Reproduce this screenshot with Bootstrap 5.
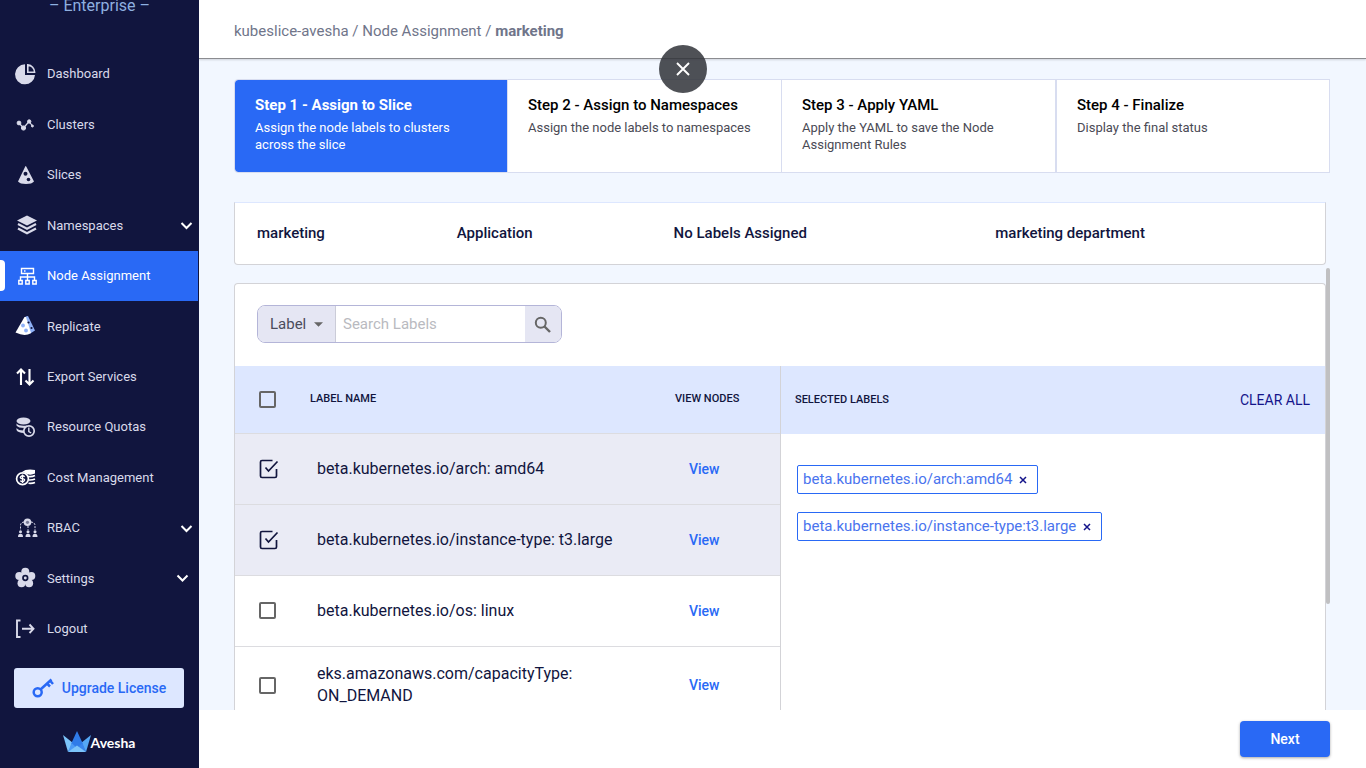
<!DOCTYPE html>
<html lang="en">
<head>
<meta charset="utf-8">
<meta name="viewport" content="width=device-width, initial-scale=1">
<title>Node Assignment - marketing</title>
<link href="https://cdn.jsdelivr.net/npm/bootstrap@5.3.0/dist/css/bootstrap.min.css" rel="stylesheet">
<style>
  :root { --navy: #11153e; --brand: #2969f5; --pale: #dde7ff; --page: #f2f7ff; --line: #d3d3d7; --step-line: #d8ddf0; }
  body { font-family: Roboto, "Liberation Sans", sans-serif; font-size: 15px; color: var(--navy); }
  a { text-decoration: none; }

  .sidebar { width: 199px; background: var(--navy); }
  .edition { height: 49px; line-height: 12px; font-size: 16px; color: #8fb0e0; }
  .side-link { color: #d9daea; font-size: 13px; padding: 0 5px 0 14px; gap: 9px; border-right: 1px solid transparent; }
  .side-link:hover { color: #fff; }
  .side-link .glyph { width: 24px; height: 24px; flex: none; }
  .side-link .chev { width: 14px; height: 14px; margin-left: auto; }
  .side-link.current { color: #fff; background: var(--brand); background-clip: padding-box; }
  .side-link.current::before { content: ""; position: absolute; left: 0; top: 9px; bottom: 10px; width: 5px; background: #fff; border-radius: 0 4px 4px 0; }
  .side-foot { height: 114px; padding: 14px 15px 0 14px; }
  .upgrade { height: 40px; background: var(--pale); color: var(--brand); font-size: 14px; font-weight: 500; border-radius: 3px; padding: 0; }
  .vendor { font-family: Lato, sans-serif; font-size: 14px; font-weight: 700; color: #fff; height: 20px; margin-top: 24px; }

  .topbar { height: 59px; padding: 5px 35px 0; border-bottom: 1px solid #8b8c90; box-shadow: 0 1px 2px rgba(0,0,0,.15); z-index: 1; }
  .topbar .crumbs, .topbar .crumbs a { color: #70758a; }
  .dismiss { top: 45px; left: 50%; margin-left: -24px; width: 48px; height: 48px; background: rgba(48,50,56,.85); z-index: 5; }

  .content { background: var(--page); padding: 20px 36px 0 35px; min-height: 0; }
  .steps { height: 94px; }
  .step { background: #fff; border: 1px solid var(--step-line); border-left-width: 0; padding: 16px 19px 0 20px; color: #111; }
  .step h2 { font-size: 15px; line-height: 18px; font-weight: 500; margin: 0 0 5px; color: #000; }
  .step p { font-size: 13px; line-height: 17px; margin: 0; color: #4a4a55; }
  .step.active { background: var(--brand); background-clip: padding-box; border-left-width: 1px; border-radius: 4px 0 0 4px; }
  .step.active h2 { font-weight: 700; }
  .step.active h2, .step.active p { color: #fff; }
  .step-last { border-left-width: 1px; }

  .summary { height: 63px; margin: 29px 4px 0 0; padding: 0 22px; background: #fff; border: 1px solid var(--line); border-top-color: var(--pale); border-radius: 0 0 4px 4px;
    display: grid; grid-template-columns: 200fr 217fr 322fr 308fr; align-items: center; font-weight: 500; }

  .scroller { margin-top: 3px; min-height: 0; }
  .panel { margin-top: 15px; background: #fff; border: 1px solid var(--line); border-bottom: 0; border-radius: 4px 4px 0 0; min-width: 0; }
  .thumb { width: 4px; height: 76%; background: #c0c0c2; border-radius: 2px; }

  .finder { height: 38px; width: 305px; margin: 21px 22px 23px; border: 1px solid #b4b5d8; border-radius: 8px; flex: none; }
  .finder select { flex: none; width: 78px; border: 0; border-right: 1px solid #cbccd8; color: #4b4d5c; padding-left: 12px; appearance: none;
    background: #e5e6f3 url("data:image/svg+xml,%3Csvg xmlns='http://www.w3.org/2000/svg' viewBox='0 0 10 5'%3E%3Cpath fill='%23666' d='M0 0h10L5 5z'/%3E%3C/svg%3E") no-repeat right 12px center / 9px 5px; }
  .finder input { border: 0; padding: 0 7px; min-width: 0; outline: 0; }
  .finder input::placeholder { color: #b9bac0; }
  .finder button { flex: none; width: 36px; border: 0; padding: 0; background: #e5e6f3; }

  .label-table { margin: 0; table-layout: fixed; }
  .label-table > :not(caption) > * > * { padding: 0; border-bottom: 1px solid #dcdce0; color: var(--navy); vertical-align: middle; background: transparent; }
  .label-table thead th { height: 67px; font-size: 11px; font-weight: 500; background: var(--pale); }
  .label-table tbody td { height: 71px; font-size: 16px; line-height: 22px; }
  .label-table tbody tr:last-child td { height: 78px; }
  .label-table tbody td:nth-child(2) { padding: 0 50px 0 7px; }
  .label-table tbody td:nth-child(3) { padding-left: 14px; }
  .label-table tr.picked td { background: #eaebf5; }
  .label-table a { color: var(--brand); font-size: 14px; font-weight: 500; }
  .col-check { width: 75px; }
  .col-view { width: 105px; }
  .tick { appearance: none; display: block; width: 17px; height: 17px; margin-left: 24px; border: 2px solid #666; border-radius: 2px; background: transparent; }
  .tick:checked { width: 20px; height: 20px; border: 0; border-radius: 0;
    background: url("data:image/svg+xml,%3Csvg xmlns='http://www.w3.org/2000/svg' viewBox='0 0 20 20' fill='none' stroke='%2311153e' stroke-width='1.700'%3E%3Cpath d='M13.500 1.500H3Q1.500 1.500 1.500 3V17Q1.500 18.500 3 18.500H16Q17.500 18.500 17.500 17V10M6.500 8.500L9.500 12L18.500 2.500'/%3E%3C/svg%3E"); }

  .picked-side { border-left: 1px solid var(--line); }
  .picked-head { height: 68px; background: var(--pale); padding: 0 15px 0 14px; font-size: 11px; font-weight: 500; }
  .clear { font-size: 14px; color: #14148a; border: 0; background: none; padding: 0; }
  .chips { padding: 31px 16px; gap: 18px; }
  .chip { height: 29px; border: 1px solid var(--brand); border-radius: 2px; padding: 0 10px 0 5px; color: #4a74ee; gap: 6px; }
  .chip button { border: 0; background: none; padding: 0; width: 9px; height: 12px; line-height: 0; }

  .footer-bar { height: 58px; padding: 0 36px; background: #fff; }
  .next { width: 90px; height: 36px; background: var(--brand); color: #fff; font-size: 14px; font-weight: 500; border-radius: 4px; border: 0; box-shadow: 0 1px 3px rgba(0,0,0,.35); }
</style>
</head>
<body>
<div class="d-flex vh-100 overflow-hidden">

  <aside class="sidebar d-flex flex-column flex-shrink-0">
    <div class="edition text-center">– Enterprise –</div>
    <nav class="d-flex flex-column flex-fill">
      <a href="#" class="side-link d-flex align-items-center flex-fill">
        <svg class="glyph" viewBox="0 0 24 24"><path fill="#d9daea" d="M11 2.300A10 10 0 1 0 21 13H11z"/><path fill="none" stroke="#d9daea" stroke-width="1.600" d="M13.800 2.900V10.200H20.600A7.500 7.500 0 0 0 13.800 2.900z"/></svg>
        Dashboard</a>
      <a href="#" class="side-link d-flex align-items-center flex-fill">
        <svg class="glyph" viewBox="0 0 24 24" fill="#d9daea" stroke="#d9daea"><path fill="none" stroke-width="1.200" d="M5 10L9.500 15L15 8.500L18.500 13"/><circle cx="5" cy="10" r="1.900"/><circle cx="9.500" cy="15" r="2.100"/><circle cx="15.200" cy="8.500" r="1.700"/><circle cx="18.400" cy="13" r="1"/></svg>
        Clusters</a>
      <a href="#" class="side-link d-flex align-items-center flex-fill">
        <svg class="glyph" viewBox="0 0 24 24"><path fill="#d9daea" d="M11.500 3Q12 3 12.500 4L20 18.500Q18 21 12 21T4 18.500L11 4z"/><g fill="#11153e"><circle cx="11.500" cy="10.800" r="2"/><circle cx="14.500" cy="16.500" r="1.800"/></g></svg>
        Slices</a>
      <a href="#" class="side-link d-flex align-items-center flex-fill">
        <svg class="glyph" viewBox="0 0 24 24"><path fill="#d9daea" d="M13 2.500L23 7.500L13 12.500L3 7.500z"/><path fill="none" stroke="#d9daea" stroke-width="2.200" d="M4 11L13 15.700L22 11M4 15.500L13 20.200L22 15.500"/></svg>
        Namespaces
        <svg class="chev" viewBox="0 0 14 14" fill="none" stroke="#fff" stroke-width="2"><path d="M2.500 5L7.500 10L12.500 5"/></svg></a>
      <a href="#" class="side-link current position-relative d-flex align-items-center flex-fill" aria-current="page">
        <svg class="glyph" viewBox="0 0 24 24" fill="none" stroke="#fff" stroke-width="1.400"><path d="M7.500 4.500H19.500V9.500H7.500zM13.500 9.500V16M6.500 16V13H20.500V16M4.800 16.500H8.200V20H4.800zM11.800 16.500H15.200V20H11.800zM18.800 16.500H22.200V20H18.800zM10 7H11.500"/></svg>
        Node Assignment</a>
      <a href="#" class="side-link d-flex align-items-center flex-fill">
        <svg class="glyph" viewBox="0 0 24 24"><path fill="#8fb1f7" d="M11.500 2.500L14 2L21 16.500L15.500 20z"/><path fill="#fff" d="M10.500 3L12 3L17 19Q11 23 1.500 18.500z"/><g fill="#8fb1f7"><circle cx="9" cy="11.500" r="1.900"/><circle cx="12" cy="16.500" r="1.900"/></g><g fill="#11153e"><circle cx="14.500" cy="8.500" r="1.100"/><circle cx="17.500" cy="14" r="1.100"/></g></svg>
        Replicate</a>
      <a href="#" class="side-link d-flex align-items-center flex-fill">
        <svg class="glyph" viewBox="0 0 24 24" fill="none" stroke="#fff" stroke-width="2.100"><path d="M7 20V5M3 8.500L7 4.500L11 8.500M15.500 4V19M11.500 15.500L15.500 19.500L19.500 15.500"/></svg>
        Export Services</a>
      <a href="#" class="side-link d-flex align-items-center flex-fill">
        <svg class="glyph" viewBox="0 0 24 24"><g fill="#d9daea"><ellipse cx="9.500" cy="6" rx="7" ry="3.500"/><path d="M2.500 8.500Q5 11.500 13 10.500L11 13Q4 13 2.500 10.500zM2.500 13Q4 15.500 10 15.500V18Q3.500 17.500 2.500 15z"/></g><circle cx="15" cy="16" r="5.200" fill="#11153e" stroke="#d9daea" stroke-width="1.700"/><path fill="none" stroke="#d9daea" stroke-width="1.400" d="M14.800 12.500V16.500L17.200 18"/></svg>
        Resource Quotas</a>
      <a href="#" class="side-link d-flex align-items-center flex-fill">
        <svg class="glyph" viewBox="0 0 24 24"><path fill="#fff" d="M8 6Q12 2.500 21 4V7.500Q17 9.500 13 8Q11 6.500 8 6z"/><path fill="none" stroke="#fff" stroke-width="1.600" d="M14 10.500Q18 11 21 9.500M15 14Q18.500 14.200 21 13M14.500 17.200Q18 17.700 21 16.500"/><circle cx="8.500" cy="12.700" r="5.900" fill="#11153e" stroke="#fff" stroke-width="1.700"/><path fill="none" stroke="#fff" stroke-width="1.300" d="M10.700 10.700Q8.500 8.900 6.800 10.500T8.500 12.700T10 15Q8.500 16.500 6.200 14.800M8.500 8.500V17"/></svg>
        Cost Management</a>
      <a href="#" class="side-link d-flex align-items-center flex-fill">
        <svg class="glyph" viewBox="0 0 24 24"><g fill="#d9daea"><circle cx="13.500" cy="6.300" r="3.800"/><circle cx="6.500" cy="15.700" r="1.500"/><circle cx="14" cy="15.700" r="1.500"/><circle cx="21" cy="15.700" r="1.500"/><path d="M4 21Q4 17.800 6.500 17.800T9 21zM11.500 21Q11.500 17.800 14 17.800T16.500 21zM18.500 21Q18.500 17.800 21 17.800T23.500 21z"/></g><circle cx="13.500" cy="6.300" r="1.600" fill="#777a95"/><path fill="none" stroke="#d9daea" stroke-dasharray="2 1.200" d="M10 6Q6.500 6.500 6.500 9.500V14M17 6Q21 6.500 21 9.500V14M14 10V14"/></svg>
        RBAC
        <svg class="chev" viewBox="0 0 14 14" fill="none" stroke="#fff" stroke-width="2"><path d="M2.500 5L7.500 10L12.500 5"/></svg></a>
      <a href="#" class="side-link d-flex align-items-center flex-fill pe-2">
        <svg class="glyph" viewBox="0 0 24 24"><g fill="#d9daea"><circle cx="11.300" cy="5.700" r="4"/><circle cx="5.300" cy="10" r="4"/><circle cx="17.300" cy="10" r="4"/><circle cx="7.500" cy="17.300" r="4"/><circle cx="15.100" cy="17.300" r="4"/><circle cx="11.300" cy="12" r="6"/></g><circle cx="11.300" cy="12" r="2.300" fill="#d9daea" stroke="#11153e" stroke-width="1.700"/></svg>
        Settings
        <svg class="chev" viewBox="0 0 14 14" fill="none" stroke="#fff" stroke-width="2"><path d="M1.500 4.500L6.500 9.500L11.500 4.500"/></svg></a>
      <a href="#" class="side-link d-flex align-items-center flex-fill">
        <svg class="glyph" viewBox="0 0 24 24" fill="none" stroke="#d9daea" stroke-width="1.900"><path d="M6.500 3.500H3V20H6.500M8 11.800H19M15.500 7.500L19.500 11.800L15.500 16"/></svg>
        Logout</a>
    </nav>
    <div class="side-foot">
      <button type="button" class="btn upgrade w-100 d-flex align-items-center justify-content-center gap-2">
        <svg width="22" height="22" viewBox="0 0 22 22" fill="none" stroke="#2969f5" stroke-width="2.500"><circle cx="5.700" cy="15.300" r="4"/><path d="M8.500 12.500L19.500 2.500M15 6.500L18 9.500M18 3.500L21 7"/></svg>
        Upgrade License</button>
      <div class="vendor d-flex align-items-center justify-content-center">
        <svg width="28" height="22" viewBox="0 0 28 22"><path fill="#7cc4fa" d="M0 4L10 12L5 21z"/><path fill="#55a8f5" d="M28 4L18 12L23 21z"/><path fill="#2f7be8" d="M14 0L20 13L14 17L8 13z"/><path fill="#4b9bf5" d="M5 21L8.500 12L14 17z"/><path fill="#3a86ee" d="M23 21L19.500 12L14 17z"/><path fill="#7cc4fa" d="M5 21L14 14.500L23 21z"/></svg>
        Avesha</div>
    </div>
  </aside>

  <div class="d-flex flex-column flex-fill overflow-hidden">
    <header class="topbar bg-white d-flex align-items-center flex-shrink-0">
      <nav class="crumbs" aria-label="breadcrumb"><a href="#">kubeslice-avesha</a> / <a href="#">Node Assignment</a> / <span class="fw-bold">marketing</span></nav>
    </header>

    <main class="content d-flex flex-column flex-fill">
      <div class="steps row g-0 flex-shrink-0">
        <div class="step active col-3"><h2>Step 1 - Assign to Slice</h2><p>Assign the node labels to clusters across the slice</p></div>
        <div class="step col-3"><h2>Step 2 - Assign to Namespaces</h2><p>Assign the node labels to namespaces</p></div>
        <div class="step col-3"><h2>Step 3 - Apply YAML</h2><p>Apply the YAML to save the Node Assignment Rules</p></div>
        <div class="step step-last col-3"><h2>Step 4 - Finalize</h2><p>Display the final status</p></div>
      </div>

      <div class="summary flex-shrink-0"><span>marketing</span><span>Application</span><span>No Labels Assigned</span><span>marketing department</span></div>

      <div class="scroller d-flex flex-fill align-items-stretch overflow-hidden">
        <section class="panel d-flex flex-column flex-fill">
          <div class="finder d-flex overflow-hidden">
            <select aria-label="Search by"><option>Label</option></select>
            <input type="text" class="flex-fill" placeholder="Search Labels" aria-label="Search Labels">
            <button type="button" aria-label="Search"><svg width="18" height="18" viewBox="0 0 18 18" fill="none" stroke="#666" stroke-width="2"><circle cx="6.800" cy="6.800" r="5"/><path stroke-width="2.400" d="M10.500 10.500L16 16"/></svg></button>
          </div>
          <div class="row g-0 flex-fill">
            <div class="col-6">
              <table class="table label-table">
                <thead><tr>
                  <th class="col-check"><input type="checkbox" class="tick" aria-label="Select all labels"></th>
                  <th>LABEL NAME</th><th class="col-view">VIEW NODES</th>
                </tr></thead>
                <tbody>
                  <tr class="picked"><td><input type="checkbox" class="tick" id="l1" checked></td><td><label for="l1">beta.kubernetes.io/arch: amd64</label></td><td><a href="#">View</a></td></tr>
                  <tr class="picked"><td><input type="checkbox" class="tick" id="l2" checked></td><td><label for="l2">beta.kubernetes.io/instance-type: t3.large</label></td><td><a href="#">View</a></td></tr>
                  <tr><td><input type="checkbox" class="tick" id="l3"></td><td><label for="l3">beta.kubernetes.io/os: linux</label></td><td><a href="#">View</a></td></tr>
                  <tr><td><input type="checkbox" class="tick" id="l4"></td><td><label for="l4">eks.amazonaws.com/capacityType: ON_DEMAND</label></td><td><a href="#">View</a></td></tr>
                </tbody>
              </table>
            </div>
            <div class="col-6 picked-side">
              <div class="picked-head d-flex align-items-center justify-content-between">SELECTED LABELS <button type="button" class="clear">CLEAR ALL</button></div>
              <div class="chips d-flex flex-column align-items-start">
                <span class="chip d-flex align-items-center">beta.kubernetes.io/arch:amd64 <button type="button" aria-label="Remove arch label"><svg width="8" height="8" viewBox="0 0 8 8" stroke="#14148a" stroke-width="1.500"><path d="M1 1L7 7M7 1L1 7"/></svg></button></span>
                <span class="chip d-flex align-items-center">beta.kubernetes.io/instance-type:t3.large <button type="button" aria-label="Remove instance-type label"><svg width="8" height="8" viewBox="0 0 8 8" stroke="#14148a" stroke-width="1.500"><path d="M1 1L7 7M7 1L1 7"/></svg></button></span>
              </div>
            </div>
          </div>
        </section>
        <div class="thumb flex-shrink-0"></div>
      </div>
    </main>

    <footer class="footer-bar d-flex align-items-center justify-content-end flex-shrink-0">
      <button type="button" class="next">Next</button>
    </footer>
  </div>
</div>

<button type="button" class="dismiss position-fixed border-0 rounded-circle p-0 d-flex align-items-center justify-content-center" aria-label="Close">
  <svg width="14" height="14" viewBox="0 0 14 14" stroke="#fff" stroke-width="1.900"><path d="M1 1L13 13M13 1L1 13"/></svg>
</button>
<script src="https://cdn.jsdelivr.net/npm/bootstrap@5.3.0/dist/js/bootstrap.bundle.min.js"></script>
</body>
</html>
